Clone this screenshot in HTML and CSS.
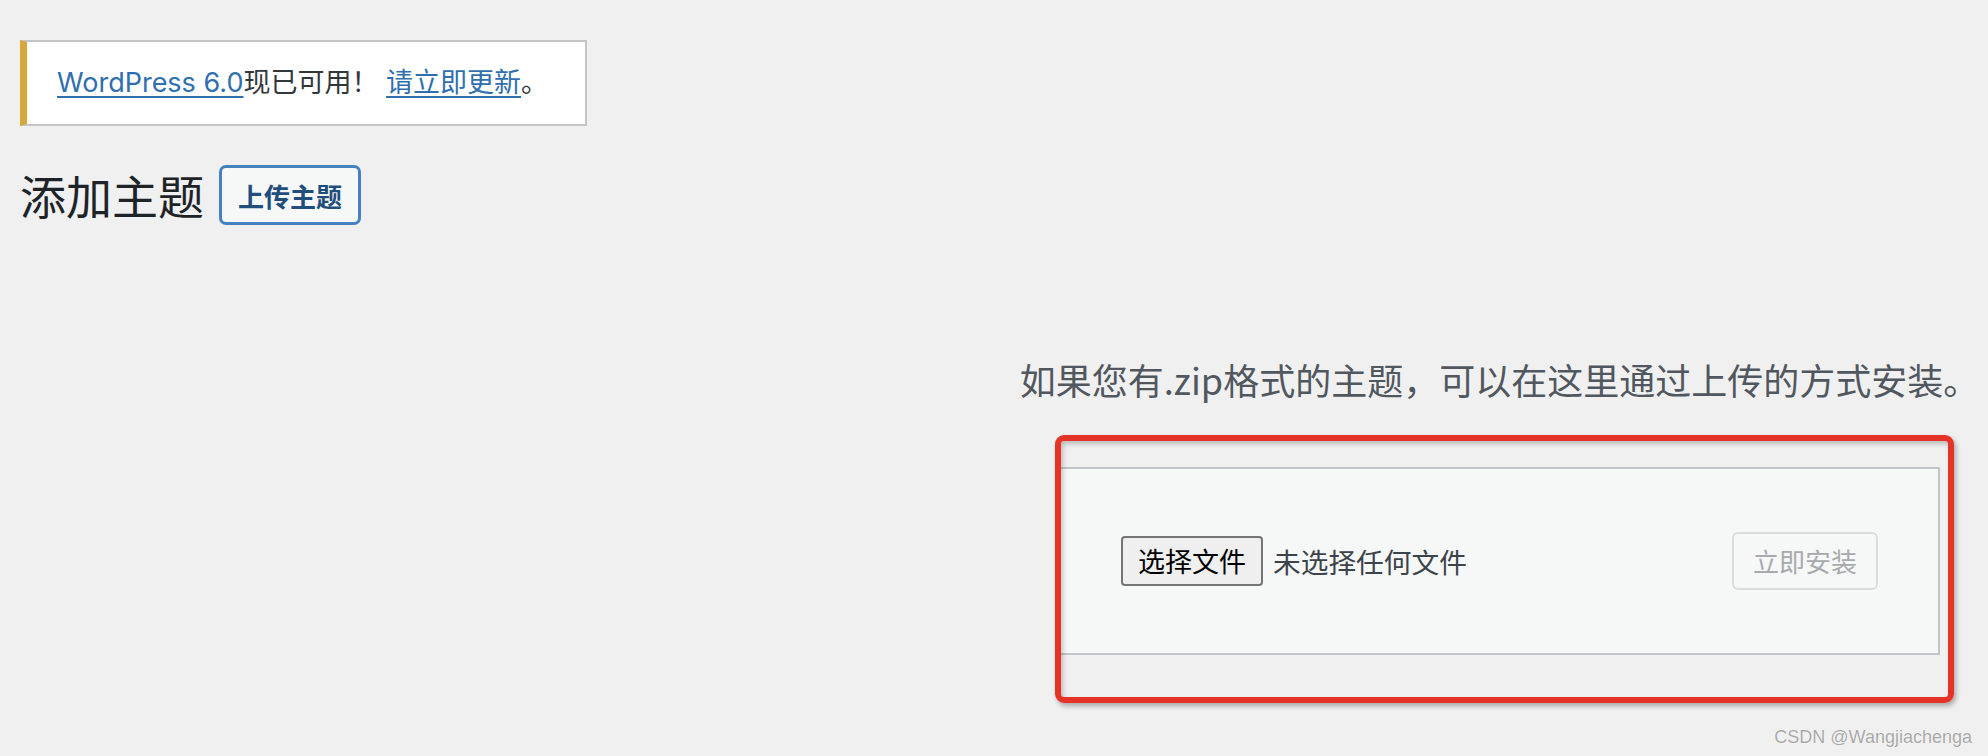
FILE: index.html
```html
<!DOCTYPE html>
<html lang="zh-CN">
<head>
<meta charset="utf-8">
<title>添加主题</title>
<link rel="stylesheet" href="styles.css">
</head>
<body>
  <div class="wrap">
    <div class="update-nag">
      <a href="#" class="nag-link">WordPress 6.0</a>现已可用！ <a href="#" class="nag-link">请立即更新</a>。
    </div>

    <div class="title-row">
      <h1 class="page-title">添加主题</h1>
      <a href="#" class="page-title-action">上传主题</a>
    </div>

    <div class="upload-theme">
      <p class="install-help">如果您有.zip格式的主题，可以在这里通过上传的方式安装。</p>
      <form class="wp-upload-form">
        <div class="file-input">
          <button type="button" class="file-btn">选择文件</button>
          <span class="file-name">未选择任何文件</span>
        </div>
        <button type="button" class="install-btn" disabled>立即安装</button>
      </form>
      <div class="annotation"></div>
    </div>
  </div>
  <div class="watermark">CSDN @Wangjiachenga</div>
</body>
</html>
```

FILE: styles.css
```css
html, body {
  margin: 0;
  padding: 0;
}

body {
  background: #f0f0f1;
  min-height: 756px;
  position: relative;
  font-family: Inter, "Noto Sans CJK SC", sans-serif;
  color: #3c434a;
  overflow: hidden;
}

.wrap {
  padding: 40px 0 0 20px;
}

.update-nag {
  box-sizing: border-box;
  width: 567px;
  background: #fff;
  border: 2px solid #c3c4c7;
  border-left: 7px solid #d6a73a;
  padding: 21px 30px;
  font-size: 27px;
  line-height: 40px;
  color: #32373c;
  white-space: nowrap;
}

.nag-link {
  color: #2f6fae;
  text-decoration: underline;
  text-decoration-thickness: 2px;
  text-underline-offset: 4px;
}

.title-row {
  display: flex;
  align-items: center;
  margin-top: 39px;
  height: 60px;
}

.page-title {
  margin: 0;
  font-family: "Noto Sans CJK SC", sans-serif;
  font-size: 46px;
  font-weight: 400;
  line-height: 60px;
  color: #1d2327;
  position: relative;
  top: -1px;
}

.page-title-action {
  margin-left: 16px;
  box-sizing: border-box;
  height: 58px;
  display: inline-flex;
  align-items: center;
  padding: 0 16px;
  border: 2px solid #4580c0;
  box-shadow: 0 0 0 1px #4580c0;
  border-radius: 6px;
  background: #f6f7f7;
  color: #1f4e7c;
  font-family: "Noto Sans CJK SC", sans-serif;
  font-size: 26px;
  font-weight: 700;
  text-decoration: none;
}

.upload-theme {
  position: relative;
  margin: 131px 0 0 991px;
  width: 977px;
  text-align: center;
}

.install-help {
  margin: 0;
  font-family: "Noto Sans CJK SC", sans-serif;
  font-size: 36px;
  line-height: 46px;
  color: #50575e;
  white-space: nowrap;
}

.wp-upload-form {
  box-sizing: border-box;
  width: 881px;
  margin: 65px auto 0;
  display: flex;
  justify-content: space-between;
  align-items: center;
  background: #f6f7f7;
  border: 2px solid #c3c4c7;
  padding: 63px 60px;
  text-align: left;
}

.file-input {
  display: flex;
  align-items: center;
  gap: 10px;
}

.file-btn {
  box-sizing: border-box;
  height: 50px;
  padding: 0 15px;
  border: 2px solid #767676;
  border-radius: 4px;
  background: #efefef;
  color: #000;
  font-family: "Noto Sans CJK SC", sans-serif;
  font-size: 27px;
  line-height: 44px;
}

.file-name {
  font-family: "Noto Sans CJK SC", sans-serif;
  font-size: 27.7px;
  color: #3c434a;
}

.install-btn {
  box-sizing: border-box;
  height: 58px;
  padding: 0 19px;
  border: 2px solid #dcdcde;
  border-radius: 6px;
  background: #f6f7f7;
  color: #a7aaad;
  font-family: "Noto Sans CJK SC", sans-serif;
  font-size: 26px;
  line-height: 52px;
}

.annotation {
  position: absolute;
  top: 79px;
  left: 44px;
  width: 899px;
  height: 268px;
  box-sizing: border-box;
  border: 6px solid #e63328;
  border-radius: 9px;
  box-shadow: 2px 3px 5px rgba(0, 0, 0, 0.3), inset 2px 3px 5px rgba(0, 0, 0, 0.22);
  pointer-events: none;
}

.watermark {
  position: absolute;
  right: 16px;
  bottom: 8px;
  font-family: "Liberation Sans", Arial, sans-serif;
  font-size: 18px;
  color: #a8a8a8;
  text-shadow: 0 0 1px #fff, 0 0 1px #fff;
}
```
